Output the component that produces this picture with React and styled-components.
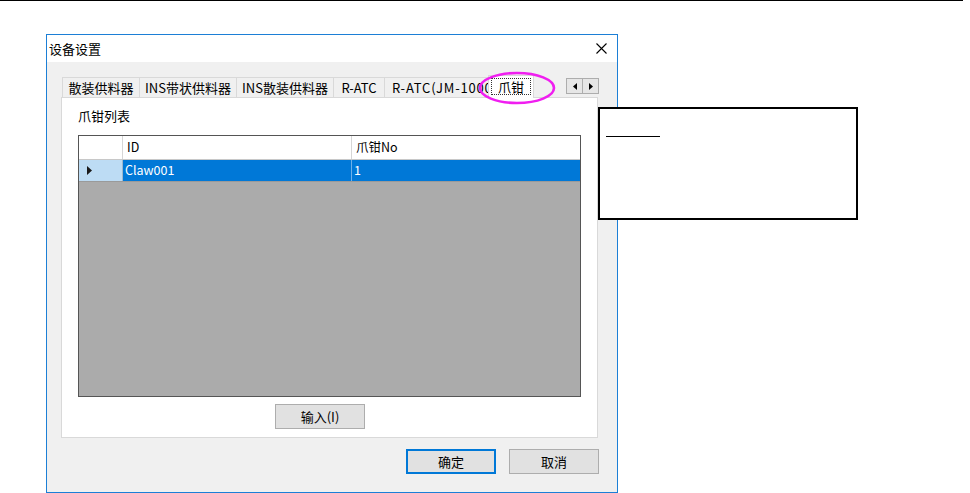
import React from "react";
import styled, { createGlobalStyle } from "styled-components";

const GlobalStyle = createGlobalStyle`
  html, body {
    margin: 0;
    padding: 0;
    background: #ffffff;
  }
  body {
    font-family: "Noto Sans CJK SC", "Microsoft YaHei", sans-serif;
    font-size: 13px;
    color: #000000;
  }
  * {
    box-sizing: border-box;
  }
`;

const Page = styled.div`
  width: 970px;
  height: 493px;
  overflow: hidden;
`;

const TopRule = styled.div`
  width: 963px;
  height: 1px;
  background: #000000;
`;

const Stage = styled.div`
  position: relative;
  padding: 33px 0 0 46px;
`;

const Dialog = styled.div`
  width: 572px;
  height: 459px;
  border: 1px solid #1c7fd6;
  background: #f0f0f0;
  display: flex;
  flex-direction: column;
`;

const TitleBar = styled.div`
  height: 27px;
  background: #ffffff;
  display: flex;
  align-items: center;
  justify-content: space-between;
  padding-left: 2px;
`;

const TitleText = styled.span`
  line-height: 1;
`;

const CloseBtn = styled.div`
  width: 32px;
  height: 27px;
  display: flex;
  align-items: center;
  justify-content: center;
`;

const Body = styled.div`
  flex: 1;
  display: flex;
  flex-direction: column;
  padding: 13px 19px 0 14px;
`;

const TabStrip = styled.div`
  display: flex;
  align-items: flex-end;
  height: 22px;
  padding-left: 1px;
`;

const Tab = styled.div`
  position: relative;
  width: ${(p) => p.w}px;
  height: ${(p) => (p.active ? 23 : 20)}px;
  margin-right: -1px;
  margin-left: ${(p) => (p.active ? -1 : 0)}px;
  margin-bottom: ${(p) => (p.active ? -1 : 0)}px;
  z-index: ${(p) => (p.active ? 2 : 1)};
  border: 1px solid #d9d9d9;
  border-bottom: none;
  background: ${(p) => (p.active ? "#ffffff" : "#f0f0f0")};
  display: flex;
  align-items: center;
  justify-content: ${(p) => (p.clip ? "flex-start" : "center")};
  padding: ${(p) => (p.clip ? "0 0 0 7px" : "0")};
  letter-spacing: ${(p) => (p.clip ? "0.8px" : "normal")};
  overflow: hidden;
  white-space: nowrap;
  line-height: 1;
`;

const FocusBox = styled.span`
  display: flex;
  align-items: center;
  justify-content: center;
  width: 40px;
  height: 17px;
  margin-bottom: 2px;
  border: 1px dotted #333333;
`;

const ScrollGroup = styled.div`
  display: flex;
  align-self: flex-start;
  margin: 3px -1px 0 auto;
`;

const ScrollBtn = styled.div`
  width: 17px;
  height: 16px;
  margin-left: ${(p) => (p.second ? -1 : 0)}px;
  border: 1px solid #adadad;
  background: #e6e6e6;
  display: flex;
  align-items: center;
  justify-content: center;
`;

const Panel = styled.div`
  height: 341px;
  background: #ffffff;
  border: 1px solid #d9d9d9;
  padding: 8px 16px 0 16px;
  display: flex;
  flex-direction: column;
`;

const PanelLabel = styled.div`
  height: 19px;
  line-height: 19px;
  margin-bottom: 10px;
`;

const Grid = styled.div`
  height: 262px;
  border: 1px solid #555555;
  background: #ababab;
  display: flex;
  flex-direction: column;
`;

const GridRow = styled.div`
  display: grid;
  grid-template-columns: 44px 229px 1fr;
  height: ${(p) => p.h}px;
  border-bottom: 1px solid ${(p) => (p.header ? "#c8c8c8" : "#9a9a9a")};
  font-size: 12.5px;
`;

const HeadCell = styled.div`
  background: #ffffff;
  border-right: ${(p) => (p.last ? "none" : "1px solid #d6d6d6")};
  display: flex;
  align-items: center;
  padding-left: 4px;
  line-height: 1;
`;

const RowHeadCell = styled.div`
  background: #bddcf4;
  border-right: 1px solid #9fb8cc;
  display: flex;
  align-items: center;
  padding-left: 8px;
`;

const DataCell = styled.div`
  background: #0078d7;
  color: #ffffff;
  border-right: ${(p) => (p.last ? "none" : "1px solid #6fb0e8")};
  display: flex;
  align-items: center;
  padding-left: 2px;
  line-height: 1;
`;

const ButtonRow = styled.div`
  display: flex;
  padding-left: ${(p) => p.offset || 0}px;
  margin-top: 7px;
`;

const Footer = styled.div`
  display: flex;
  justify-content: flex-end;
  gap: 13px;
  margin: 11px -1px 0 0;
`;

const Button = styled.div`
  width: 90px;
  height: 25px;
  background: #e1e1e1;
  border: ${(p) => (p.primary ? "2px solid #0078d7" : "1px solid #adadad")};
  display: flex;
  align-items: center;
  justify-content: center;
  line-height: 1;
`;

const Note = styled.div`
  position: absolute;
  left: 598px;
  top: 106px;
  width: 260px;
  height: 113px;
  border: 2px solid #000000;
  background: #ffffff;
  padding: 27px 0 0 6px;
`;

const NoteRule = styled.div`
  width: 54px;
  height: 1px;
  background: #000000;
`;

const Highlight = styled.svg`
  position: absolute;
  left: 478px;
  top: 70px;
  pointer-events: none;
  z-index: 5;
`;

const tabs = [
  { label: "散装供料器", w: 78 },
  { label: "INS带状供料器", w: 98 },
  { label: "INS散装供料器", w: 98 },
  { label: "R-ATC", w: 52 },
  { label: "R-ATC(JM-1000)", w: 106, clip: true },
];

const App = () => {
  return (
    <Page>
      <GlobalStyle />
      <TopRule />
      <Stage>
        <Dialog>
          <TitleBar>
            <TitleText>设备设置</TitleText>
            <CloseBtn>
              <svg width="11" height="11" viewBox="0 0 11 11">
                <path d="M0.5 0.5 L10.5 10.5 M10.5 0.5 L0.5 10.5" stroke="#000" strokeWidth="1.1" />
              </svg>
            </CloseBtn>
          </TitleBar>
          <Body>
            <TabStrip>
              {tabs.map((t) => (
                <Tab key={t.label} w={t.w} clip={t.clip}>
                  {t.label}
                </Tab>
              ))}
              <Tab w={46} active>
                <FocusBox>爪钳</FocusBox>
              </Tab>
              <ScrollGroup>
                <ScrollBtn>
                  <svg width="4" height="7" viewBox="0 0 4 7">
                    <path d="M4 0 L0 3.5 L4 7 Z" fill="#000" />
                  </svg>
                </ScrollBtn>
                <ScrollBtn second>
                  <svg width="4" height="7" viewBox="0 0 4 7">
                    <path d="M0 0 L4 3.5 L0 7 Z" fill="#000" />
                  </svg>
                </ScrollBtn>
              </ScrollGroup>
            </TabStrip>
            <Panel>
              <PanelLabel>爪钳列表</PanelLabel>
              <Grid>
                <GridRow h={24} header>
                  <HeadCell />
                  <HeadCell>ID</HeadCell>
                  <HeadCell last>爪钳No</HeadCell>
                </GridRow>
                <GridRow h={22}>
                  <RowHeadCell>
                    <svg width="5" height="9" viewBox="0 0 5 9">
                      <path d="M0 0 L5 4.5 L0 9 Z" fill="#1a1a1a" />
                    </svg>
                  </RowHeadCell>
                  <DataCell>Claw001</DataCell>
                  <DataCell last>1</DataCell>
                </GridRow>
              </Grid>
              <ButtonRow offset={197}>
                <Button>输入(I)</Button>
              </ButtonRow>
            </Panel>
            <Footer>
              <Button primary>确定</Button>
              <Button>取消</Button>
            </Footer>
          </Body>
        </Dialog>
        <Note>
          <NoteRule />
        </Note>
        <Highlight width="78" height="34" viewBox="0 0 78 34">
          <ellipse cx="39" cy="17" rx="37" ry="15" fill="none" stroke="#f01ef0" strokeWidth="2.6" />
        </Highlight>
      </Stage>
    </Page>
  );
};

export default App;
